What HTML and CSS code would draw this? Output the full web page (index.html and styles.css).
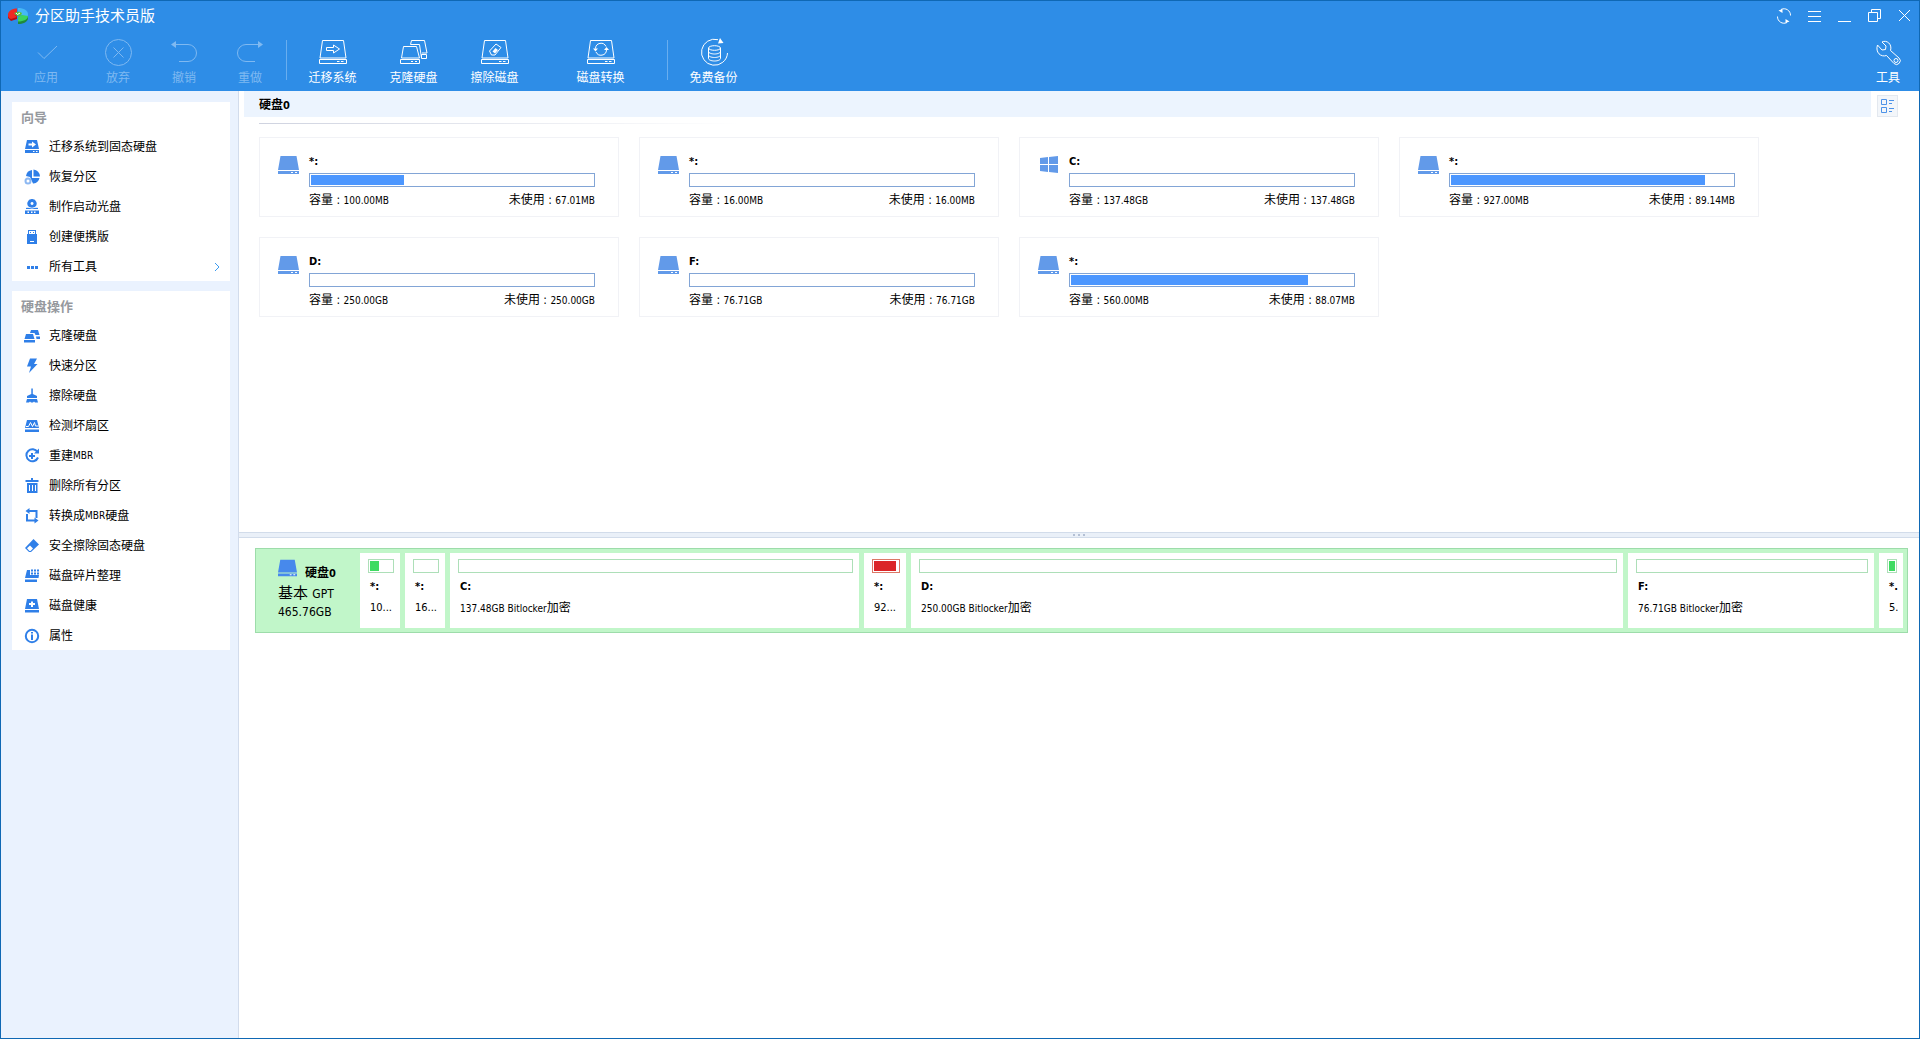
FILE: index.html
```html
<!DOCTYPE html>
<html lang="zh-CN">
<head>
  <meta charset="UTF-8">
  <title>分区助手技术员版</title>
  <link rel="stylesheet" href="styles.css">
</head>
<body>

  <!-- shared icons -->
  <svg class="sprite" width="0" height="0">
    <symbol id="drive" viewBox="0 0 21 18">
      <path fill="currentColor" d="M2.5 0h16L21 14H0zM0 15h21v3H0z"/>
      <path fill="#fff" d="M13 16h2v1h-2zM17 16h2v1h-2z"/>
    </symbol>
    <symbol id="drive-line" viewBox="0 0 28 28">
      <path d="M3.5 2.5h21l2.5 17.500H1zM.5 21.500h27v4H.500zM18 23.500h2.500M22 23.500h2.500"/>
    </symbol>
  </svg>

  <div class="window">
    <header class="top">
      <div class="titlebar">
        <svg class="logo" viewBox="0 0 20 16">
          <path fill="#b80d12" d="M0 6v4l3 3 6-2V7z"/>
          <path fill="#ee2a24" d="M0 7C0 3 4 .5 9 .5v4L7 7l2 2-6 2C1 10 0 9 0 7z"/>
          <path fill="#45b8f5" d="M10 0c6 0 10 2.500 10 6.500 0 1-.5 2-1 2.500l-6-2-3-2.500z"/>
          <path fill="#1f8a3c" d="M10 12v4c5 0 9-2 10-5V8z"/>
          <path fill="#3ad45f" d="M10 9l4-2 6 1c0 3-4 5.500-10 5.500z"/>
          <path fill="#5cc23a" d="M6 5l5-1.500 3 1.500-1 2.500-4 .5z"/>
          <path fill="none" stroke="#fff" d="M8 5l1.500 1.500L12 5"/>
        </svg>
        <h1>分区助手技术员版</h1>
        <div class="controls">
          <button aria-label="刷新"><svg viewBox="0 0 16 16"><path d="M5 1.500a6.500 6.500 0 0 1 9.500 6M11 14.500A6.500 6.500 0 0 1 1.500 8.500"/><path fill="#fff" d="M6.500 1v4L2.500 2.500zM9.500 15v-4l4 2.500z" stroke="none"/></svg></button>
          <button aria-label="菜单"><svg viewBox="0 0 16 16"><path d="M2 3.500h13M2 8.500h13M2 13.500h13"/></svg></button>
          <button aria-label="最小化"><svg viewBox="0 0 16 16"><path d="M2 13.500h13"/></svg></button>
          <button aria-label="还原"><svg viewBox="0 0 16 16"><path d="M2.500 4.500h9v9h-9zM5.500 4.500v-3h9v9h-3"/></svg></button>
          <button aria-label="关闭"><svg viewBox="0 0 16 16"><path d="M3 2l11 11M14 2L3 13"/></svg></button>
        </div>
      </div>

      <div class="toolbar">
        <button class="tool first" disabled><svg viewBox="0 0 28 28"><path d="M6 14.500l6 6L25 8"/></svg>应用</button>
        <button class="tool" disabled><svg viewBox="0 0 28 28"><circle cx="14.500" cy="14.500" r="13"/><path d="M9.500 9.500l10 10M19.500 9.500l-10 10"/></svg>放弃</button>
        <button class="tool" disabled><svg viewBox="0 0 28 28"><path d="M5 6.500h13a8.500 8.500 0 0 1 0 17H9"/><path class="solid" d="M1 6.500L6 3v7z"/></svg>撤销</button>
        <button class="tool" disabled><svg viewBox="0 0 28 28"><path d="M23 6.500H10a8.500 8.500 0 0 0 0 17h9"/><path class="solid" d="M27 6.500L22 3v7z"/></svg>重做</button>
        <span class="sep"></span>
        <button class="tool wide"><svg viewBox="0 0 28 28"><use href="#drive-line"/><path d="M7.500 9.500h7V7l6 4-6 4v-2.500h-7z"/></svg>迁移系统</button>
        <button class="tool wide"><svg viewBox="0 0 28 28"><path d="M3.500 8.500h13l3 11.500H1.500zM.5 21.500h19v4H.500zM11 23.500h2M15 23.500h2M10.500 6.500l1-4h13l2.500 12.500H22M10.500 6.500h9l2 13.500M21.500 16.500h5v4h-5z"/></svg>克隆硬盘</button>
        <button class="tool wide"><svg viewBox="0 0 28 28"><use href="#drive-line"/><path d="M8.500 13l6.500-7 5 3.500-6 7.500h-3.500z"/><path class="solid" d="M11.500 13.500l3-3.500 2.500 2-3 3.500z"/></svg>擦除磁盘</button>
        <button class="tool wide convert"><svg viewBox="0 0 28 28"><use href="#drive-line"/><path d="M8.500 10.500a5.500 5.500 0 0 1 10.500-2M19.500 12a5.500 5.500 0 0 1-10.500 2"/><path class="solid" d="M6 10.500h5l-2.500 3zM17 12h5l-2.500-3z"/></svg>磁盘转换</button>
        <span class="sep far"></span>
        <button class="tool wide"><svg viewBox="0 0 28 28"><path d="M18 1.700A13 13 0 1 0 27.500 15M8.500 10v10.500c0 1.300 2.700 2.500 6 2.500s6-1.200 6-2.500V10M8.500 13.500c0 1.300 2.700 2.500 6 2.500s6-1.200 6-2.500M8.500 17c0 1.300 2.700 2.500 6 2.500s6-1.200 6-2.500"/><ellipse cx="14.500" cy="10" rx="6" ry="2.300"/><path class="solid" d="M20 0l3.500 5-5.500.5z"/></svg>免费备份</button>
        <button class="tool tools"><svg viewBox="0 0 28 28"><path d="M8 4c4.500-2.500 10.500 2 8.500 8.500l8.500 7.500a3.500 3.500 0 0 1-5 5.500l-7.500-8C7 19.500 1 14.500 3.500 7l4.500 5 3.500-.5.500-3.500z"/><circle cx="22" cy="22.500" r="2"/></svg>工具</button>
      </div>
    </header>

    <div class="content">
      <aside class="sidebar">
        <nav class="panel">
          <h2>向导</h2>
          <button class="item"><svg viewBox="0 0 16 16"><path d="M3 1h10l2 9H1zM1 11h14v3H1z"/><path class="cut" d="M4.500 4.500H8v-2L12 5.500 8 8.500v-2H4.500zM9 12h1.500v1H9zM12 12h1.500v1H12z"/></svg>迁移系统到固态硬盘</button>
          <button class="item"><svg viewBox="0 0 16 16"><path d="M8 1a7 7 0 0 0-6 6l4 1 3 6.500h.500A7 7 0 0 0 15.500 9H8zM9.500.500V7.500h6.500A7 7 0 0 0 9.500.500z"/><circle class="ring" cx="4" cy="12" r="2.500"/></svg>恢复分区</button>
          <button class="item"><svg viewBox="0 0 16 16"><path d="M8 0a4.500 4.500 0 0 0-3 8l-3 1v1h12V9l-3-1a4.500 4.500 0 0 0-3-8zM1 11.500h14v3.500H1z"/><path class="cut" d="M8 3a1.500 1.500 0 1 0 .1 0zM3 8.500l5 1 5-1v-1l-5 1.200-5-1.200zM3.500 12.500H5V14H3.500zM7 12.500h1.500V14H7zM10 12.500h1.500V14H10z"/></svg>制作启动光盘</button>
          <button class="item"><svg viewBox="0 0 16 16"><path d="M4 1h8v4h1v10H3V5h1z"/><path class="cut" d="M5 2h6v3H5zM6 12h4v1H6z"/><path d="M6 3h1v1H6zM9 3h1v1H9z"/></svg>创建便携版</button>
          <button class="item"><svg viewBox="0 0 16 16"><path d="M3 7h3v3H3zM7 7h3v3H7zM11 7h3v3h-3z"/></svg>所有工具
            <svg class="chevron" viewBox="0 0 6 10"><path d="M1 1l4 4-4 4"/></svg></button>
        </nav>

        <nav class="panel">
          <h2>硬盘操作</h2>
          <button class="item"><svg viewBox="0 0 16 16"><path d="M2 6h7l1.500 5H.500zM0 12h11v2.500H0zM6 5l1-3h7l1.500 5h-4L10.500 5zM12 8.500h4V11h-3.500z"/></svg>克隆硬盘</button>
          <button class="item"><svg viewBox="0 0 16 16"><path d="M6 .500h7L10 6h3.500L5 15l2-6.500H3z"/></svg>快速分区</button>
          <button class="item"><svg viewBox="0 0 16 16"><path d="M7.300.500h1.500V6l4.200 2v2H3V8l4.300-2zM3 11h10l1 3.500H11l-1-1-1 1H7l-1-1-1 1H2z"/></svg>擦除硬盘</button>
          <button class="item"><svg viewBox="0 0 16 16"><path d="M3 2h10l2 8H1zM1 11.500h14V14H1z"/><path class="line" d="M2 8.500h2.500l2-4 2 4 2-4 1 3.500h3"/></svg>检测坏扇区</button>
          <button class="item"><svg viewBox="0 0 16 16"><path class="stroke" d="M13.500 4A6 6 0 1 0 14 9.500M8 5v6M5 8h6"/><path d="M10 5.500h5v-5z"/></svg>重建<span class="num">MBR</span></button>
          <button class="item"><svg viewBox="0 0 16 16"><path d="M7 0h2v2h5.500v2h-13V2H7zM3 5h10.500v10H3z"/><path class="cut" d="M5 7h1v6H5zM8 7h1v6H8zM11 7h1v6h-1z"/></svg>删除所有分区</button>
          <button class="item"><svg viewBox="0 0 16 16"><path class="stroke" d="M4 3h8.500v7M12 12.500H3V6"/><path d="M5.500 0v6L1.500 3zM10.500 9.500v6l4-3z"/></svg>转换成<span class="num">MBR</span>硬盘</button>
          <button class="item"><svg viewBox="0 0 16 16"><path d="M9.500 1L15 6.500 7 14H5L1 10z"/><path class="cut" d="M6 7.500l3 3L6.500 13h-1L3 10.300z"/></svg>安全擦除固态硬盘</button>
          <button class="item"><svg viewBox="0 0 16 16"><path d="M3 2h3v5h9l-.5 3H1zM1 11.500h12V14H1zM7 1.500h2v2H7zM10 1.500h2v2h-2zM13 1.500h2v2h-2zM7 4.500h2v2H7zM10 4.500h2v2h-2zM13 4.500h2v2h-2z"/></svg>磁盘碎片整理</button>
          <button class="item"><svg viewBox="0 0 16 16"><path d="M3 1h10l2 10H1zM1 12h14v2.500H1z"/><path class="cut" d="M7 3.500h2V5h2v2H9v2H7V7H5V5h2z"/></svg>磁盘健康</button>
          <button class="item"><svg viewBox="0 0 16 16"><circle class="stroke" cx="8" cy="8" r="6.200"/><path d="M7 4h2v1.500H7zM7 6.500h2V12H7z"/></svg>属性</button>
        </nav>
      </aside>

      <main class="main">
        <section class="upper">
          <div class="disk-head">
            <h2>硬盘<span class="zero">0</span></h2>
            <button class="view" aria-label="视图"><svg viewBox="0 0 13 14"><path d="M.5.500h5v5h-5zM.5 8.500h5v5h-5zM8 1.500h5M8 4.500h3M8 9.500h5M8 12.500h3"/></svg></button>
          </div>
          <div class="rule"></div>
          <div class="cards">
            <article class="card">
              <svg class="card-icon"><use href="#drive"/></svg>
              <div class="card-body">
                <h3>*:</h3>
                <div class="bar"><i style="width: 33%"></i></div>
                <p><span>容量 : <span class="num">100.00MB</span></span><span>未使用 : <span class="num">67.01MB</span></span></p>
              </div>
            </article>
            <article class="card">
              <svg class="card-icon"><use href="#drive"/></svg>
              <div class="card-body">
                <h3>*:</h3>
                <div class="bar"></div>
                <p><span>容量 : <span class="num">16.00MB</span></span><span>未使用 : <span class="num">16.00MB</span></span></p>
              </div>
            </article>
            <article class="card">
              <svg class="card-icon" viewBox="0 0 21 18"><path fill="currentColor" d="M2 2l8-1v7H2zM11 .900l9-.9v8h-9zM2 9h8v7l-8-1zM11 9h9v8l-9-.9z"/></svg>
              <div class="card-body">
                <h3>C:</h3>
                <div class="bar"></div>
                <p><span>容量 : <span class="num">137.48GB</span></span><span>未使用 : <span class="num">137.48GB</span></span></p>
              </div>
            </article>
            <article class="card">
              <svg class="card-icon"><use href="#drive"/></svg>
              <div class="card-body">
                <h3>*:</h3>
                <div class="bar"><i style="width: 90%"></i></div>
                <p><span>容量 : <span class="num">927.00MB</span></span><span>未使用 : <span class="num">89.14MB</span></span></p>
              </div>
            </article>
            <article class="card">
              <svg class="card-icon"><use href="#drive"/></svg>
              <div class="card-body">
                <h3>D:</h3>
                <div class="bar"></div>
                <p><span>容量 : <span class="num">250.00GB</span></span><span>未使用 : <span class="num">250.00GB</span></span></p>
              </div>
            </article>
            <article class="card">
              <svg class="card-icon"><use href="#drive"/></svg>
              <div class="card-body">
                <h3>F:</h3>
                <div class="bar"></div>
                <p><span>容量 : <span class="num">76.71GB</span></span><span>未使用 : <span class="num">76.71GB</span></span></p>
              </div>
            </article>
            <article class="card">
              <svg class="card-icon"><use href="#drive"/></svg>
              <div class="card-body">
                <h3>*:</h3>
                <div class="bar"><i style="width: 84%"></i></div>
                <p><span>容量 : <span class="num">560.00MB</span></span><span>未使用 : <span class="num">88.07MB</span></span></p>
              </div>
            </article>
          </div>
        </section>

        <div class="splitter"><i></i><i></i><i></i></div>

        <section class="lower">
          <div class="map">
            <div class="disk">
              <div class="disk-name"><svg><use href="#drive"/></svg><b>硬盘<span class="zero">0</span></b></div>
              <div class="disk-type">基本 <span>GPT</span></div>
              <div class="disk-size">465.76GB</div>
            </div>
            <div class="part small">
              <div class="bar"><i style="width: 41%"></i></div>
              <h3>*:</h3>
              <p>10...</p>
            </div>
            <div class="part small">
              <div class="bar"></div>
              <h3>*:</h3>
              <p>16...</p>
            </div>
            <div class="part" style="flex-grow: 395">
              <div class="bar"></div>
              <h3>C:</h3>
              <p><span class="num">137.48GB Bitlocker</span>加密</p>
            </div>
            <div class="part small full">
              <div class="bar"><i style="width: 92%"></i></div>
              <h3>*:</h3>
              <p>92...</p>
            </div>
            <div class="part" style="flex-grow: 698">
              <div class="bar"></div>
              <h3>D:</h3>
              <p><span class="num">250.00GB Bitlocker</span>加密</p>
            </div>
            <div class="part" style="flex-grow: 232">
              <div class="bar"></div>
              <h3>F:</h3>
              <p><span class="num">76.71GB Bitlocker</span>加密</p>
            </div>
            <div class="part tiny">
              <div class="bar"><i style="width: 100%"></i></div>
              <h3>*.</h3>
              <p>5.</p>
            </div>
          </div>
        </section>
      </main>
    </div>
  </div>

</body>
</html>
```
FILE: styles.css
```css
* {
  box-sizing: border-box;
}
body {
  margin: 0;
  font-family: "DejaVu Sans Condensed", "Noto Sans CJK SC", sans-serif;
  font-size: 12px;
  line-height: 16px;
  color: #000;
}
h1, h2, h3, p {
  margin: 0;
  font-size: inherit;
}
button {
  margin: 0;
  padding: 0;
  border: none;
  background: none;
  font: inherit;
  color: inherit;
  cursor: pointer;
}
.sprite {
  position: absolute;
}
.num {
  font-size: 10px;
}
.window {
  display: flex;
  flex-direction: column;
  height: 100vh;
  border: 1px solid #0f68b4;
}

/* title bar and toolbar */
.top {
  background: #2e8de7;
  color: #fff;
}
.top svg {
  fill: none;
  stroke: currentColor;
}
.titlebar {
  display: flex;
  align-items: center;
  height: 30px;
  padding-left: 7px;
}
.titlebar .logo {
  width: 20px;
  height: 16px;
  stroke: none;
}
.titlebar h1 {
  margin-left: 7px;
  font-size: 15px;
  font-weight: normal;
  line-height: 28px;
}
.controls {
  display: flex;
  margin-left: auto;
}
.controls button {
  display: flex;
  align-items: center;
  justify-content: center;
  width: 30px;
  height: 30px;
}
.controls svg {
  width: 16px;
  height: 16px;
}
.toolbar {
  display: flex;
  height: 60px;
  padding-left: 6px;
}
.tool {
  display: flex;
  flex-direction: column;
  align-items: center;
  gap: 4px;
  width: 66px;
  padding-top: 7px;
}
.tool svg {
  width: 28px;
  height: 28px;
}
.tool .solid {
  fill: currentColor;
  stroke: none;
}
.tool:disabled {
  color: #7fb9f1;
  cursor: default;
}
.tool.first {
  width: 78px;
}
.tool.wide {
  width: 81px;
}
.tool.convert {
  margin-left: 25px;
}
.tool.tools {
  width: 62px;
  margin-left: auto;
}
.sep {
  width: 1px;
  height: 40px;
  margin: 9px 5px 0 3px;
  background: #69aeef;
}
.sep.far {
  margin-left: 26px;
}

/* sidebar */
.content {
  display: flex;
  flex: 1;
  min-height: 0;
}
.sidebar {
  display: flex;
  flex-direction: column;
  gap: 10px;
  width: 238px;
  padding: 11px 8px 0 11px;
  border-right: 1px solid #d2dcec;
  background: #eaf2fe;
}
.panel {
  background: #fff;
}
.panel h2 {
  height: 29px;
  padding-left: 9px;
  font-size: 13px;
  line-height: 31px;
  color: #96999e;
}
.item {
  display: flex;
  align-items: center;
  width: 100%;
  height: 30px;
  padding: 2px 10px 0 12px;
  text-align: left;
}
.item svg {
  width: 16px;
  height: 16px;
  margin-right: 9px;
  fill: #2f7fe8;
}
.item .cut {
  fill: #fff;
}
.item .line {
  fill: none;
  stroke: #fff;
}
.item .ring {
  fill: #fff;
  stroke: #8db8f2;
  stroke-width: 2;
}
.item .stroke {
  fill: none;
  stroke: #2f7fe8;
  stroke-width: 2;
}
.item .chevron {
  width: 6px;
  height: 10px;
  margin: 0 0 0 auto;
  fill: none;
  stroke: #3c9bf0;
}

/* partition list */
.main {
  display: flex;
  flex-direction: column;
  flex: 1;
  min-width: 0;
  background: #fff;
}
.upper {
  height: 441px;
  padding-left: 5px;
}
.disk-head {
  display: flex;
  align-items: flex-start;
}
.disk-head h2 {
  flex: 1;
  height: 26px;
  padding-left: 15px;
  line-height: 28px;
  background: #ecf4fe;
}
.zero {
  font-size: 11px;
}
.view {
  display: flex;
  align-items: center;
  justify-content: center;
  width: 21px;
  height: 22px;
  margin: 4px 21px 0 6px;
  border: 1px solid #e3e8ef;
  background: #f3f6fa;
}
.view svg {
  width: 13px;
  height: 14px;
  fill: none;
  stroke: #4d93e8;
}
.rule {
  width: 480px;
  height: 1px;
  margin: 6px 0 13px 15px;
  background: linear-gradient(to right, #cfd3e0, #fff);
}
.cards {
  display: grid;
  grid-template-columns: repeat(auto-fill, 360px);
  gap: 20px;
  padding-left: 15px;
}
.card {
  display: flex;
  gap: 10px;
  height: 80px;
  padding: 15px 23px 0 18px;
  border: 1px solid #f1f2f6;
}
.card-icon {
  width: 21px;
  height: 18px;
  margin-top: 3px;
  color: #629ae9;
}
.card-body {
  flex: 1;
}
.card h3 {
  height: 20px;
  font-size: 11px;
  line-height: 18px;
}
.bar {
  height: 14px;
  padding: 1px;
  border: 1px solid #82a5d6;
  background: #fff;
}
.bar i {
  display: block;
  height: 100%;
  background: #4c97ff;
}
.card p {
  display: flex;
  justify-content: space-between;
  margin-top: 5px;
}

/* splitter */
.splitter {
  display: flex;
  justify-content: center;
  gap: 3px;
  height: 6px;
  padding-top: 1px;
  border: 1px solid #d2dcea;
  border-width: 1px 0;
  background: #eaf0f8;
}
.splitter i {
  width: 2px;
  height: 2px;
  background: #b4c0d4;
}

/* disk map */
.lower {
  padding: 10px 11px 0 16px;
}
.map {
  display: flex;
  gap: 5px;
  height: 85px;
  padding: 4px;
  border: 1px solid #9ddcaa;
  background: #c1f6c9;
}
.disk {
  width: 95px;
  padding: 6px 0 0 18px;
}
.disk-name {
  display: flex;
  align-items: flex-start;
  gap: 8px;
  height: 25px;
}
.disk-name svg {
  width: 19px;
  height: 18px;
  color: #4789ec;
}
.disk-name b {
  padding-top: 6px;
}
.disk-type {
  font-size: 15px;
  line-height: 18px;
}
.disk-type span {
  font-size: 12px;
}
.disk-size {
  line-height: 18px;
}
.part {
  flex: 0 1 0;
  padding: 6px 6px 0 8px;
  overflow: hidden;
  background: #fff;
}
.part.small {
  flex-basis: 40px;
}
.part.full {
  flex-basis: 42px;
}
.part.tiny {
  flex-basis: 24px;
}
.part .bar {
  border-color: #addfb8;
}
.part .bar i {
  background: #3fdb62;
}
.part.full .bar {
  border-color: #dc7866;
}
.part.full .bar i {
  background: #db2528;
}
.part h3 {
  padding: 6px 0 0 2px;
  font-size: 11px;
}
.part p {
  padding: 5px 0 0 2px;
  white-space: nowrap;
}
.part.small p, .part.tiny p {
  font-size: 11px;
}
```
